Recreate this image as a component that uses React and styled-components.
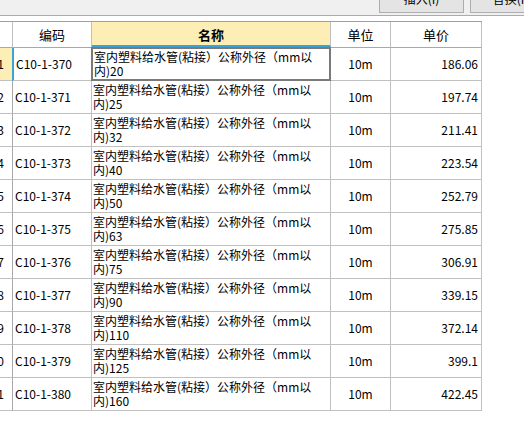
import React from "react";
import styled, { createGlobalStyle } from "styled-components";

const rows = [
	["370", "20", "186.06"],
	["371", "25", "197.74"],
	["372", "32", "211.41"],
	["373", "40", "223.54"],
	["374", "50", "252.79"],
	["375", "63", "275.85"],
	["376", "75", "306.91"],
	["377", "90", "339.15"],
	["378", "110", "372.14"],
	["379", "125", "399.1"],
	["380", "160", "422.45"],
];

const App = () => {
	return (
		<Page>
			<Global />
			<TopBar>
				<Button>插入(I)</Button>
				<Button>替换(R)</Button>
			</TopBar>
			<Grid>
				<Head />
				<Head>编码</Head>
				<Head active>名称</Head>
				<Head>单位</Head>
				<Head>单价</Head>
				{rows.map(([code, size, price], i) => (
					<React.Fragment key={code}>
						<Index selected={i === 0}>
							<span>{i + 1}</span>
						</Index>
						<Code marked={i === 0}>C10-1-{code}</Code>
						<Name focused={i === 0}>
							<div>室内塑料给水管(粘接）公称外径（mm以</div>
							<div>内){size}</div>
						</Name>
						<Unit>10m</Unit>
						<Price>{price}</Price>
					</React.Fragment>
				))}
			</Grid>
		</Page>
	);
};

export default App;

const Global = createGlobalStyle`
	html, body {
		margin: 0;
		padding: 0;
		background: #ffffff;
		overflow: hidden;
	}
	body {
		font-family: "Noto Sans CJK SC", "Noto Sans", sans-serif;
		font-size: 12px;
		color: #000;
	}
`;

const Page = styled.div`
	width: 524px;
	height: 422px;
	overflow: hidden;
	background: #fff;
`;

const TopBar = styled.div`
	height: 16px;
	display: flex;
	justify-content: flex-end;
	align-items: flex-end;
	gap: 6px;
	padding: 0 0 2px 0;
	box-sizing: border-box;
	background: #f0f0f0;
	border-bottom: 1px solid #86c77c;
	margin-bottom: 5px;
	margin-right: -31px;
`;

const Button = styled.div`
	flex: none;
	width: 85px;
	height: 30px;
	box-sizing: border-box;
	border: 1px solid #adadad;
	background: #e4e4e4;
	display: flex;
	align-items: center;
	justify-content: center;
	padding-top: 2px;
	line-height: 12px;
`;

const Grid = styled.div`
	display: grid;
	grid-template-columns: 13px 79px 239px 60px 91px;
	grid-template-rows: 26px repeat(11, 33px);
	width: 482px;
	border-top: 1px solid #a0a0a0;
`;

const Cell = styled.div`
	box-sizing: border-box;
	border-right: 1px solid #c0c0c0;
	border-bottom: 1px solid #c0c0c0;
	display: flex;
	align-items: center;
	overflow: hidden;
	white-space: nowrap;
	line-height: 14px;
`;

const Head = styled(Cell)`
	justify-content: center;
	font-size: 13px;
	font-weight: ${({ active }) => (active ? 700 : 400)};
	background: ${({ active }) => (active ? "#fdeeb6" : "#fff")};
	border-bottom: ${({ active }) =>
		active ? "3px solid #37a5dc" : "1px solid #a8a8a8"};
	padding-top: ${({ active }) => (active ? "2px" : "0")};
`;

const Index = styled(Cell)`
	justify-content: flex-end;
	padding-right: 8px;
	background: ${({ selected }) => (selected ? "#fdeeb6" : "#fff")};
	border-right: 1px solid #a8a8a8;
`;

const Code = styled(Cell)`
	padding-left: 2px;
	border-left: ${({ marked }) => (marked ? "2px solid #37a5dc" : "none")};
	margin-left: ${({ marked }) => (marked ? "-1px" : "0")};
`;

const Name = styled(Cell)`
	flex-direction: column;
	align-items: flex-start;
	justify-content: center;
	padding-left: 1px;
	border: ${({ focused }) => (focused ? "2px solid #7a7a7a" : "none")};
	border-right: ${({ focused }) =>
		focused ? "2px solid #7a7a7a" : "1px solid #c0c0c0"};
	border-bottom: ${({ focused }) =>
		focused ? "2px solid #7a7a7a" : "1px solid #c0c0c0"};
	margin: ${({ focused }) => (focused ? "-1px 0 0 -1px" : "0")};
	line-height: 14px;
`;

const Unit = styled(Cell)`
	justify-content: center;
`;

const Price = styled(Cell)`
	justify-content: flex-end;
	padding-right: 3px;
`;
